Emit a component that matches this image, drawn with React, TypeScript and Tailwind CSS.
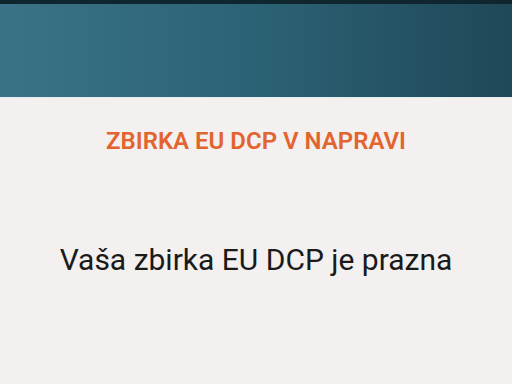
export default function App() {
  return (
    <div className="w-[512px] h-[384px] flex flex-col bg-[#f3f0ef] overflow-hidden" style={{ fontFamily: "Roboto, 'Noto Sans', sans-serif" }}>
      <div className="h-[4px] bg-[#10262f]" />
      <div className="h-[93px] bg-gradient-to-r from-[#3a7387] via-[#2c6275] to-[#1f4858]" />
      <div className="h-[1px] bg-[#e4eef0]" />
      <div className="flex flex-col items-center">
        <div className="mt-[29px] text-[24px] leading-[28px] font-semibold text-[#e2642e]">ZBIRKA EU DCP V NAPRAVI</div>
        <div className="mt-[87px] text-[30px] leading-[36px] text-[#1a1a1a]">Vaša zbirka EU DCP je prazna</div>
      </div>
    </div>
  );
}
